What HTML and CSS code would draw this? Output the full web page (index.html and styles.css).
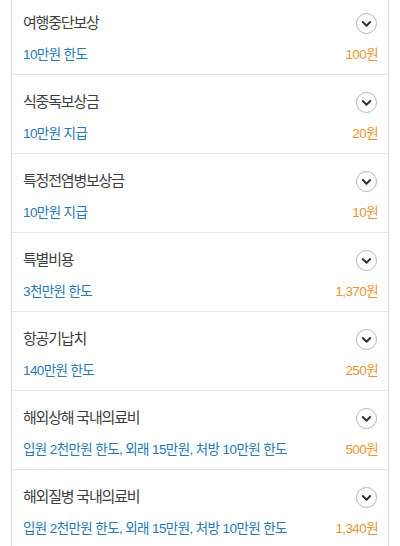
FILE: index.html
```html
<!DOCTYPE html>
<html lang="ko">
<head>
<meta charset="utf-8">
<link rel="stylesheet" href="styles.css">
</head>
<body>
<ul class="list">
  <li class="item">
    <div class="row"><span class="title">여행중단보상</span><span class="toggle"><svg viewBox="0 0 21 21" width="21" height="21"><circle cx="10.5" cy="10.5" r="10" fill="#fff" stroke="#b5b5b5"/><path d="M6.8 9 L10.5 12.7 L14.2 9" fill="none" stroke="#333" stroke-width="2" stroke-linecap="round" stroke-linejoin="round"/></svg></span></div>
    <div class="row sub"><span class="desc">10만원 한도</span><span class="price">100원</span></div>
  </li>
  <li class="item">
    <div class="row"><span class="title">식중독보상금</span><span class="toggle"><svg viewBox="0 0 21 21" width="21" height="21"><circle cx="10.5" cy="10.5" r="10" fill="#fff" stroke="#b5b5b5"/><path d="M6.8 9 L10.5 12.7 L14.2 9" fill="none" stroke="#333" stroke-width="2" stroke-linecap="round" stroke-linejoin="round"/></svg></span></div>
    <div class="row sub"><span class="desc">10만원 지급</span><span class="price">20원</span></div>
  </li>
  <li class="item">
    <div class="row"><span class="title">특정전염병보상금</span><span class="toggle"><svg viewBox="0 0 21 21" width="21" height="21"><circle cx="10.5" cy="10.5" r="10" fill="#fff" stroke="#b5b5b5"/><path d="M6.8 9 L10.5 12.7 L14.2 9" fill="none" stroke="#333" stroke-width="2" stroke-linecap="round" stroke-linejoin="round"/></svg></span></div>
    <div class="row sub"><span class="desc">10만원 지급</span><span class="price">10원</span></div>
  </li>
  <li class="item">
    <div class="row"><span class="title">특별비용</span><span class="toggle"><svg viewBox="0 0 21 21" width="21" height="21"><circle cx="10.5" cy="10.5" r="10" fill="#fff" stroke="#b5b5b5"/><path d="M6.8 9 L10.5 12.7 L14.2 9" fill="none" stroke="#333" stroke-width="2" stroke-linecap="round" stroke-linejoin="round"/></svg></span></div>
    <div class="row sub"><span class="desc">3천만원 한도</span><span class="price">1,370원</span></div>
  </li>
  <li class="item">
    <div class="row"><span class="title">항공기납치</span><span class="toggle"><svg viewBox="0 0 21 21" width="21" height="21"><circle cx="10.5" cy="10.5" r="10" fill="#fff" stroke="#b5b5b5"/><path d="M6.8 9 L10.5 12.7 L14.2 9" fill="none" stroke="#333" stroke-width="2" stroke-linecap="round" stroke-linejoin="round"/></svg></span></div>
    <div class="row sub"><span class="desc">140만원 한도</span><span class="price">250원</span></div>
  </li>
  <li class="item">
    <div class="row"><span class="title">해외상해 국내의료비</span><span class="toggle"><svg viewBox="0 0 21 21" width="21" height="21"><circle cx="10.5" cy="10.5" r="10" fill="#fff" stroke="#b5b5b5"/><path d="M6.8 9 L10.5 12.7 L14.2 9" fill="none" stroke="#333" stroke-width="2" stroke-linecap="round" stroke-linejoin="round"/></svg></span></div>
    <div class="row sub"><span class="desc">입원 2천만원 한도, 외래 15만원, 처방 10만원 한도</span><span class="price">500원</span></div>
  </li>
  <li class="item">
    <div class="row"><span class="title">해외질병 국내의료비</span><span class="toggle"><svg viewBox="0 0 21 21" width="21" height="21"><circle cx="10.5" cy="10.5" r="10" fill="#fff" stroke="#b5b5b5"/><path d="M6.8 9 L10.5 12.7 L14.2 9" fill="none" stroke="#333" stroke-width="2" stroke-linecap="round" stroke-linejoin="round"/></svg></span></div>
    <div class="row sub"><span class="desc">입원 2천만원 한도, 외래 15만원, 처방 10만원 한도</span><span class="price">1,340원</span></div>
  </li>
</ul>
</body>
</html>
```

FILE: styles.css
```css
html, body {
  margin: 0;
  padding: 0;
  background: #fff;
}
body {
  font-family: "Liberation Sans", "Noto Sans CJK KR", sans-serif;
  overflow: hidden;
}
.list {
  list-style: none;
  margin: -5px 11px 0;
  padding: 0;
  border-left: 1px solid #dcdcdc;
  border-right: 1px solid #dcdcdc;
}
.item {
  padding: 15px 10px 11px 11px;
  border-top: 1px solid #e6e6e6;
  height: 52px;
}
.row {
  display: flex;
  align-items: center;
  justify-content: space-between;
  height: 20px;
}
.row.sub {
  margin-top: 12px;
}
.title {
  font-size: 15px;
  color: #3d3d3d;
  letter-spacing: -1.2px;
}
.toggle {
  display: flex;
  width: 21px;
  height: 21px;
  margin-top: 5px;
  margin-right: 1px;
}
.desc {
  font-size: 13.5px;
  color: #2478b5;
  letter-spacing: -0.6px;
}
.price {
  font-size: 13.5px;
  color: #ec9330;
  letter-spacing: -0.6px;
}
```
